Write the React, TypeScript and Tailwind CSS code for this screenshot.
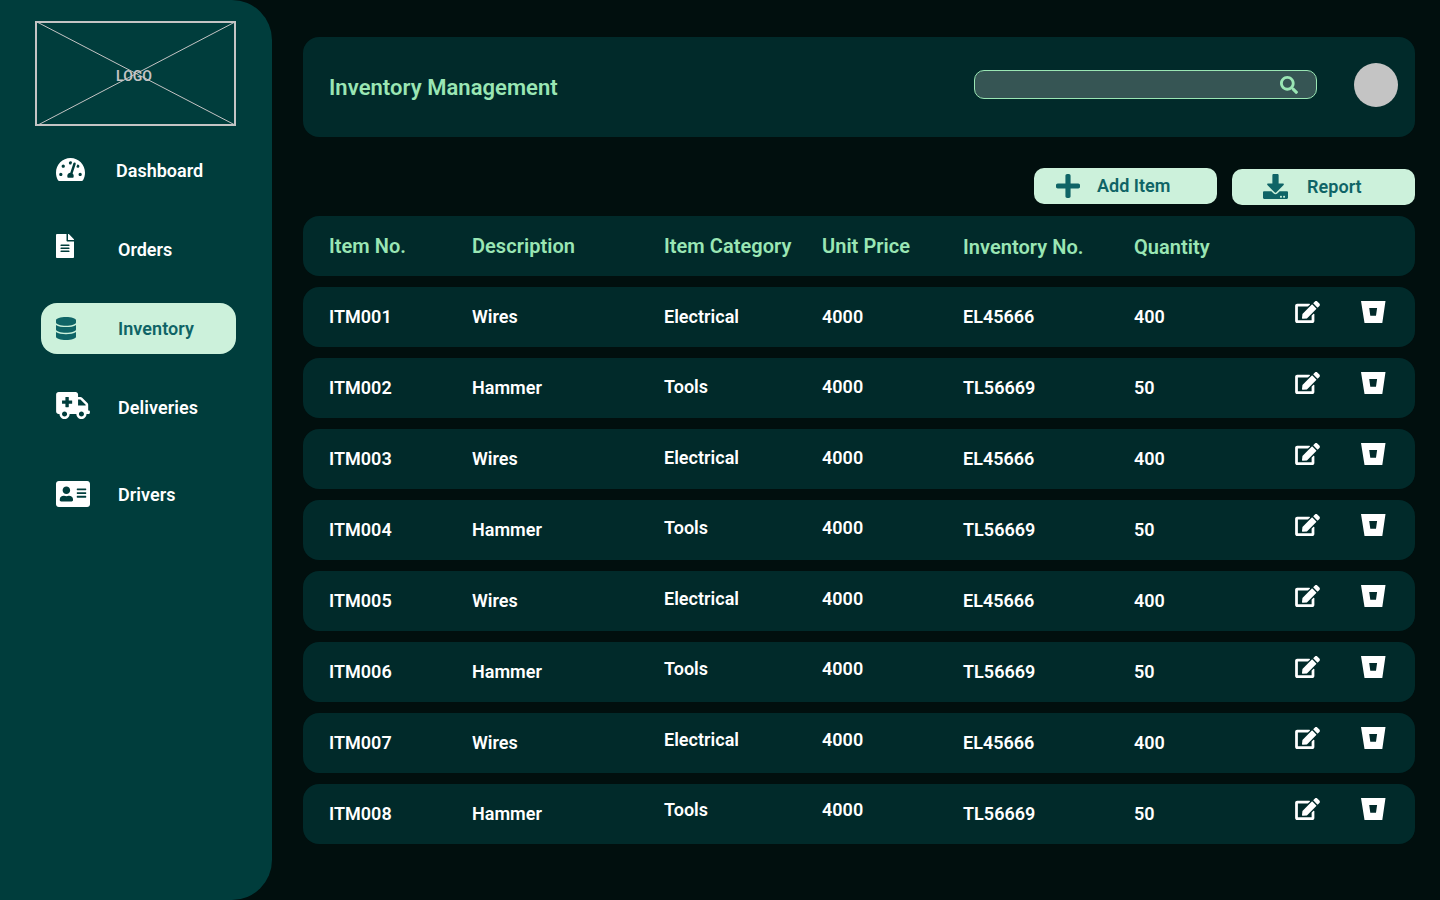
import { FaTachometerAlt, FaFileAlt, FaDatabase, FaAmbulance, FaAddressCard, FaSearch, FaPlus, FaDownload, FaEdit } from 'react-icons/fa';

const row = (n: number) => {
  const wires = n % 2 === 1;
  return {
    id: `ITM00${n}`,
    description: wires ? 'Wires' : 'Hammer',
    category: wires ? 'Electrical' : 'Tools',
    price: '4000',
    inventory: wires ? 'EL45666' : 'TL56669',
    quantity: wires ? '400' : '50',
  };
};

const rows = [1, 2, 3, 4, 5, 6, 7, 8].map(row);

/* The category and price columns drift upwards against the rest of each row. */
const middleShift = ['pt-0', 'pb-0.5', 'pb-0.5', 'pb-1', 'pb-1', 'pb-1.5', 'pb-1.5', 'pb-2'];

const columns = 'grid grid-cols-[143px_192px_158px_141px_171px_161px_66px_1fr] pl-[26px]';

function Bucket() {
  return (
    <svg className="h-[22px] w-[25px]" viewBox="0 0 25 22" fill="currentColor" fillRule="evenodd">
      <path d="M0 0h24.5l-3.2 22H3.5zM8.2 7l1.1 7.7h5.7L16.1 7z" />
    </svg>
  );
}

export default function App() {
  return (
    <div className="flex h-[900px] w-[1440px] overflow-hidden bg-[#010f0e] font-[Roboto,sans-serif] text-lg leading-[21px] font-semibold tracking-[0.003em] text-white">
      <aside className="h-[900px] w-[272px] shrink-0 rounded-r-[40px] bg-[#003d3c]">
        <div className="mt-[21px] ml-[35px] grid h-[105px] w-[201px] grid-cols-1 grid-rows-1 text-[#c4c4c4]">
          <svg className="col-start-1 row-start-1" width="201" height="105" viewBox="0 0 201 105" fill="none" stroke="currentColor">
            <rect x="1" y="1" width="199" height="103" strokeWidth="2" />
            <path d="M2 1l199 103.5M2 104.5L200 1" strokeWidth="1" />
          </svg>
          <span className="col-start-1 row-start-1 mt-[47px] ml-[81px] text-sm leading-4 tracking-normal">LOGO</span>
        </div>
        <nav>
          <div className="mt-[19px] ml-[41px] flex h-[50px] pl-[15px]">
            <span className="w-[60px] pt-[13px]">
              <FaTachometerAlt className="h-[23px] w-[29px]" viewBox="0 32 576 448" preserveAspectRatio="none" />
            </span>
            <span className="pt-[15px] tracking-normal">Dashboard</span>
          </div>
          <div className="mt-[29px] ml-[41px] flex h-[50px] pl-[15px]">
            <span className="w-[62px] pt-[10px]"><FaFileAlt className="h-6 w-[18px]" /></span>
            <span className="pt-[15px] tracking-normal">Orders</span>
          </div>
          <div className="mt-[29px] ml-[41px] flex h-[51px] w-[195px] rounded-2xl bg-[#ccf1db] pl-[15px] text-[#0f6466]">
            <span className="w-[62px] pt-[14px]"><FaDatabase className="h-[23px] w-5" /></span>
            <span className="pt-[15px]">Inventory</span>
          </div>
          <div className="mt-[28px] ml-[41px] flex h-[50px] pl-[15px]">
            <span className="w-[62px] pt-[10px]"><FaAmbulance className="h-[27px] w-[34px]" /></span>
            <span className="pt-[15px]">Deliveries</span>
          </div>
          <div className="mt-[37px] ml-[41px] flex h-[50px] pl-[15px]">
            <span className="w-[62px] pt-3">
              <FaAddressCard className="h-[26px] w-[34px]" viewBox="0 32 576 448" preserveAspectRatio="none" />
            </span>
            <span className="pt-[15px]">Drivers</span>
          </div>
        </nav>
      </aside>

      <main className="ml-[31px] w-[1112px] shrink-0 pt-[37px]">
        <header className="flex h-[100px] rounded-2xl bg-[#012a2a] pl-[26px]">
          <h1 className="w-[645px] pt-[38px] text-[22px] leading-[26px] tracking-[0.002em] text-[#9ae6b4]">Inventory Management</h1>
          <div className="mt-[33px] flex h-[29px] w-[343px] justify-end rounded-[10px] border border-[#9ae6b4] bg-[#365554] pt-[5px] pr-[18px] text-[#9ae6b4]">
            <FaSearch className="size-[18px]" />
          </div>
          <div className="mt-[26px] ml-[37px] size-11 rounded-full bg-[#c4c4c4]" />
        </header>

        <div className="mt-[31px] flex justify-end gap-[15px] text-[#0f6466]">
          <button className="flex h-9 w-[183px] rounded-[10px] bg-[#ccf1db] pl-[22px]">
            <FaPlus className="mt-[4px] h-7 w-6" />
            <span className="mt-[7px] ml-[17px] tracking-normal">Add Item</span>
          </button>
          <button className="mt-px flex h-9 w-[183px] rounded-[10px] bg-[#ccf1db] pl-[31px]">
            <FaDownload className="mt-[5px] size-[25px]" />
            <span className="mt-[7px] ml-[19px]">Report</span>
          </button>
        </div>

        <section className="mt-[11px] flex flex-col gap-[11px]">
          <div className={`${columns} h-[60px] rounded-2xl bg-[#012a2a] pt-[18px] text-xl leading-6 tracking-[0.002em] whitespace-nowrap text-[#9ae6b4]`}>
            <span>Item No.</span>
            <span>Description</span>
            <span>Item Category</span>
            <span>Unit Price</span>
            <span className="pt-px">Inventory No.</span>
            <span className="pt-px">Quantity</span>
          </div>
          {rows.map((r, i) => (
            <div key={r.id} className={`${columns} h-[60px] items-center rounded-2xl bg-[#012a2a] pb-0.5 tracking-[0.001em]`}>
              <span>{r.id}</span>
              <span>{r.description}</span>
              <span className={middleShift[i]}>{r.category}</span>
              <span className={middleShift[i]}>{r.price}</span>
              <span>{r.inventory}</span>
              <span>{r.quantity}</span>
              <FaEdit className="mb-[9px] h-[22px] w-[25px]" />
              <span className="pb-2"><Bucket /></span>
            </div>
          ))}
        </section>
      </main>
    </div>
  );
}
